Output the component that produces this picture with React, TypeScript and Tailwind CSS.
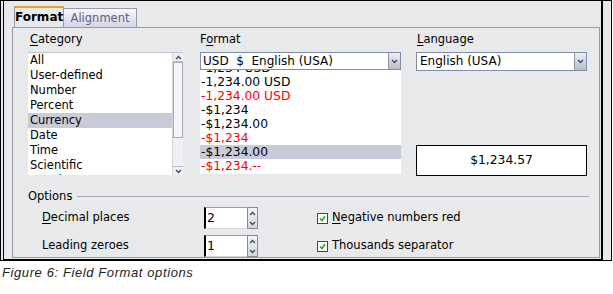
import React from 'react';

const Chevron = ({ up = false }: { up?: boolean }) => (
  <svg width="7" height="5" viewBox="0 0 7 5" className="block">
    <path
      d={up ? 'M1 4 L3.5 1.5 L6 4' : 'M1 1 L3.5 3.5 L6 1'}
      fill="none"
      stroke="#3d4a63"
      strokeWidth="1.3"
    />
  </svg>
);

const Mn = ({ children }: { children: React.ReactNode }) => (
  <span className="underline underline-offset-[2px] decoration-1">{children}</span>
);

function DropButton() {
  return (
    <div className="w-[12px] h-full flex items-center justify-center border-l border-[#8b93a6] bg-gradient-to-b from-[#eceef3] to-[#b9bdcc]">
      <Chevron />
    </div>
  );
}

function SpinBox({ value }: { value: string }) {
  return (
    <div className="flex h-[22px] w-[55px]">
      <div className="w-[43px] bg-white border-t border-t-[#9c9c9c] border-l-2 border-l-black border-b border-b-[#d8d8d8] pl-[1px] text-[12.5px] leading-[20px]">
        {value}
      </div>
      <div className="w-[11px] flex flex-col border border-[#8b8b8b] bg-gradient-to-b from-[#f4f4f8] to-[#d4d6e0]">
        <div className="flex-1 flex items-center justify-center"><Chevron up /></div>
        <div className="flex-1 flex items-center justify-center"><Chevron /></div>
      </div>
    </div>
  );
}

function Check({ label }: { label: React.ReactNode }) {
  return (
    <div className="flex items-center gap-[4px]">
      <div className="w-[11px] h-[11px] border border-[#1f4e7a] bg-white flex items-center justify-center">
        <svg width="7" height="7" viewBox="0 0 7 7">
          <path d="M1 3.5 L3 5.5 L6 1.2" fill="none" stroke="#21a121" strokeWidth="1.5" />
        </svg>
      </div>
      <span>{label}</span>
    </div>
  );
}

export default function App() {
  const categories = ['All', 'User-defined', 'Number', 'Percent', 'Currency', 'Date', 'Time', 'Scientific', 'Fraction'];
  const formats = [
    { t: '-1,234 USD', red: false },
    { t: '-1,234.00 USD', red: false },
    { t: '-1,234.00 USD', red: true },
    { t: '-$1,234', red: false },
    { t: '-$1,234.00', red: false },
    { t: '-$1,234', red: true },
    { t: '-$1,234.00', red: false, sel: true },
    { t: '-$1,234.--', red: true },
  ];

  return (
    <div className="w-[613px] h-[294px] bg-white font-['DejaVu_Sans',sans-serif] text-black">
      <div className="w-[612px] h-[261px] border border-black bg-[#e8e9eb]">
        <div className="h-full ml-[2px] mr-[8px] border-l border-r-2 border-b border-black flex flex-col">
          {/* Tabs */}
          <div className="flex items-end ml-[10px] mt-[5px] h-[21px] relative z-10">
            <div className="h-[21px] w-[50px] border-t-2 border-t-[#f0a028] border-l border-r border-[#9a9aa0] bg-[#e8e9eb] text-[12px] font-bold leading-[18px] text-center">
              Format
            </div>
            <div className="h-[19px] w-[73px] border-t border-r border-[#9a9aa8] bg-gradient-to-b from-[#f6f6fc] to-[#d3d5e5] text-[11.5px] leading-[18px] text-center text-[#5f6478]">
              Alignment
            </div>
          </div>

          {/* Panel */}
          <div className="ml-[8px] w-[588px] flex-1 mb-[1px] border border-[#9a9aa0] flex flex-col text-[11.5px]">
            <div className="flex pl-[15px] pt-[5px]">
              {/* Category */}
              <div className="w-[155px] flex flex-col">
                <div className="h-[13px] leading-[13px] pl-[2px]"><Mn>C</Mn>ategory</div>
                <div className="mt-[6px] h-[123px] flex bg-white border-t border-[#c4c4cc] overflow-hidden">
                  <div className="flex-1 overflow-hidden">
                    {categories.map((c) => (
                      <div
                        key={c}
                        className={`h-[15px] leading-[15px] pl-[2px] ${c === 'Currency' ? 'bg-[#c9cbd8]' : ''}`}
                      >
                        {c}
                      </div>
                    ))}
                  </div>
                  <div className="w-[11px] flex flex-col border-l border-[#d4d6de] bg-[#eef0f4]">
                    <div className="h-[9px] flex items-center justify-center border-b border-[#b8bcc8]"><Chevron up /></div>
                    <div className="h-[76px] border border-[#a4a8b8] bg-[#f6f6fa]" />
                    <div className="flex-1" />
                    <div className="h-[9px] flex items-center justify-center border-t border-[#b8bcc8]"><Chevron /></div>
                  </div>
                </div>
              </div>

              {/* Format */}
              <div className="w-[201px] ml-[17px] flex flex-col">
                <div className="h-[13px] leading-[13px]">F<Mn>o</Mn>rmat</div>
                <div className="mt-[6px] h-[18px] flex bg-white border border-[#7f8ea8]">
                  <div className="flex-1 pl-[2px] leading-[16px] text-[12px] whitespace-pre">USD  $  English (USA)</div>
                  <DropButton />
                </div>
                <div className="h-[104px] bg-white overflow-hidden text-[12.3px]">
                  <div className="-mt-[9px]">
                    {formats.map((f, i) => (
                      <div
                        key={i}
                        className={`h-[14px] leading-[14px] pl-[1px] ${f.red ? 'text-[#ff0000]' : ''} ${f.sel ? 'bg-[#c9cbd8]' : ''}`}
                      >
                        {f.t}
                      </div>
                    ))}
                  </div>
                </div>
              </div>

              {/* Language */}
              <div className="w-[171px] ml-[15px] flex flex-col">
                <div className="h-[13px] leading-[13px] pl-[1px]"><Mn>L</Mn>anguage</div>
                <div className="mt-[6px] h-[19px] flex bg-white border border-[#7f8ea8]">
                  <div className="flex-1 pl-[3px] leading-[17px] text-[12px]">English (USA)</div>
                  <DropButton />
                </div>
                <div className="mt-[74px] h-[31px] bg-white border border-black flex items-center justify-center text-[12.3px]">
                  $1,234.57
                </div>
              </div>
            </div>

            {/* Options */}
            <div className="flex items-center mt-[14px] pl-[15px] pr-[10px] h-[13px]">
              <span className="leading-[13px]">Options</span>
              <div className="flex-1 ml-[5px] h-px bg-[#a8a8ae]" />
            </div>

            <div className="flex items-center mt-[4px] h-[22px] pl-[29px]">
              <div className="w-[162px]"><Mn>D</Mn>ecimal places</div>
              <SpinBox value="2" />
              <div className="ml-[58px]">
                <Check label={<><Mn>N</Mn>egative numbers red</>} />
              </div>
            </div>
            <div className="flex items-center mt-[6px] h-[22px] pl-[29px]">
              <div className="w-[162px]">Leading zeroes</div>
              <SpinBox value="1" />
              <div className="ml-[58px]">
                <Check label="Thousands separator" />
              </div>
            </div>
          </div>
        </div>
      </div>
      <div className="mt-[4px] pl-[2px] font-['Liberation_Sans',sans-serif] italic text-[13px] tracking-[0.6px] text-[#222] leading-[15px]">
        Figure 6: Field Format options
      </div>
    </div>
  );
}
